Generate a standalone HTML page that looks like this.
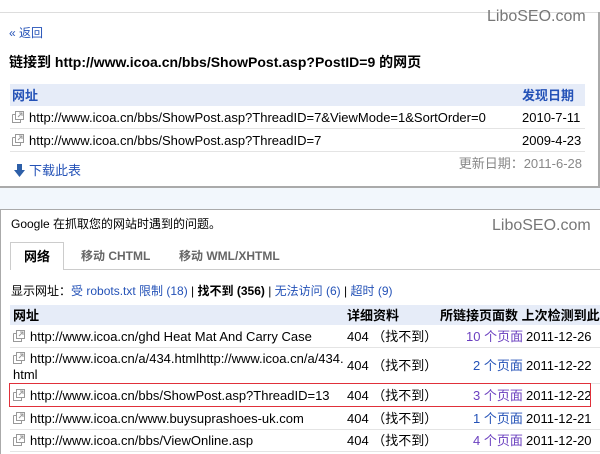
<!DOCTYPE html>
<html><head><meta charset="utf-8"><style>
*{margin:0;padding:0;box-sizing:border-box}
body{width:600px;height:454px;overflow:hidden;background:#fff;font-family:"Liberation Sans","Noto Sans CJK SC",sans-serif;position:relative;color:#000}
.a{position:absolute;white-space:nowrap;line-height:15px}
.lib{font-size:16px;color:#777;line-height:18px}
.blue{color:#2452b7}
.u{font-size:13px}
.ic{display:inline-block;width:12px;height:12px;vertical-align:-1px;margin-right:5px}
.line{position:absolute;height:1px;background:#e4e4e4}
</style></head><body>
<svg width="0" height="0" style="position:absolute"><symbol id="i" viewBox="0 0 12 12"><path d="M0.5 3.5h3M0.5 3.5v8h8v-3" fill="none" stroke="#999"/><rect x="3.5" y="0.5" width="8" height="8" fill="#fff" stroke="#999"/><path d="M6 6l4-4M7 2h3v3" fill="none" stroke="#999"/></symbol></svg>
<div class="line" style="left:0;top:12px;width:600px;background:#ddd"></div>
<div class="a lib" style="left:487px;top:8px">LiboSEO.com</div>
<div class="a blue" style="left:9px;top:26px;font-size:12px">« 返回</div>
<div class="a" style="left:9px;top:55px;font-size:14px;font-weight:bold">链接到 http://www.icoa.cn/bbs/ShowPost.asp?PostID=9 的网页</div>
<div class="a" style="left:10px;top:84px;width:575px;height:22px;background:#e6ecf8"></div>
<div class="a blue" style="left:12px;top:88px;font-size:13px;font-weight:bold">网址</div>
<div class="a blue" style="left:522px;top:88px;font-size:13px;font-weight:bold">发现日期</div>
<div class="a u" style="left:12px;top:110px"><svg class="ic"><use href="#i"/></svg>http://www.icoa.cn/bbs/ShowPost.asp?ThreadID=7&amp;ViewMode=1&amp;SortOrder=0</div>
<div class="a u" style="left:522px;top:110px">2010-7-11</div>
<div class="line" style="left:10px;top:128px;width:575px"></div>
<div class="a u" style="left:12px;top:133px"><svg class="ic"><use href="#i"/></svg>http://www.icoa.cn/bbs/ShowPost.asp?ThreadID=7</div>
<div class="a u" style="left:522px;top:133px">2009-4-23</div>
<div class="line" style="left:10px;top:151px;width:575px"></div>
<div class="a" style="top:156px;font-size:13px;color:#888;right:18px;text-align:right">更新日期：2011-6-28</div>
<div class="a" style="left:14px;top:164px;width:11px;height:13px">
<svg width="11" height="13"><path d="M3 0h5v6h3l-5.5 7L0 6h3z" fill="#2d5fa8"/></svg></div>
<div class="a blue" style="left:29px;top:163px;font-size:13px">下载此表</div>
<div class="a" style="left:598px;top:12px;width:2px;height:176px;background:#aaa"></div>
<div class="a" style="left:0;top:186px;width:600px;height:2px;background:#aaa"></div>
<div class="a" style="left:0;top:188px;width:600px;height:21px;background:#f2f7fc"></div>
<div class="a" style="left:0;top:209px;width:600px;height:1px;background:#aaa"></div>
<div class="a" style="left:0;top:209px;width:1px;height:245px;background:#aaa"></div>
<div class="a" style="left:11px;top:217px;font-size:12px">Google 在抓取您的网站时遇到的问题。</div>
<div class="a lib" style="left:492px;top:217px">LiboSEO.com</div>
<div class="a" style="left:10px;top:269px;width:590px;height:1px;background:#ccc"></div>
<div class="a" style="left:10px;top:242px;width:54px;height:28px;border:1px solid #ccc;border-bottom:none;background:#fff"></div>
<div class="a" style="left:24px;top:249px;font-size:13px;font-weight:bold">网络</div>
<div class="a" style="left:81px;top:249px;font-size:12px;font-weight:bold;color:#666">移动 CHTML</div>
<div class="a" style="left:179px;top:249px;font-size:12px;font-weight:bold;color:#666">移动 WML/XHTML</div>
<div class="a" style="left:11px;top:284px;font-size:12px">显示网址：<span class="blue">受 robots.txt 限制 (18)</span> | <b>找不到 (356)</b> | <span class="blue">无法访问 (6)</span> | <span class="blue">超时 (9)</span></div>
<div class="a" style="left:10px;top:305px;width:590px;height:20px;background:#e6ecf8"></div>
<div class="a" style="left:13px;top:308px;font-size:13px;font-weight:bold">网址</div>
<div class="a" style="left:347px;top:308px;font-size:13px;font-weight:bold">详细资料</div>
<div class="a" style="left:440px;top:308px;font-size:13px;font-weight:bold">所链接页面数 上次检测到此</div>
<div class="a u" style="left:13px;top:329px"><svg class="ic"><use href="#i"/></svg>http://www.icoa.cn/ghd Heat Mat And Carry Case</div>
<div class="a u" style="left:347px;top:329px">404 （找不到）</div>
<div class="a u" style="left:466px;top:329px;color:#6a3fbf">10 个页面</div>
<div class="a u" style="left:526px;top:329px">2011-12-26</div>
<div class="line" style="left:10px;top:347px;width:590px"></div>
<div class="a u" style="left:13px;top:351px;line-height:16px"><svg class="ic"><use href="#i"/></svg>http://www.icoa.cn/a/434.htmlhttp://www.icoa.cn/a/434.<br>html</div>
<div class="a u" style="left:347px;top:358px">404 （找不到）</div>
<div class="a u" style="left:473px;top:358px;color:#2452b7">2 个页面</div>
<div class="a u" style="left:526px;top:358px">2011-12-22</div>
<div class="line" style="left:10px;top:383px;width:590px"></div>
<div class="a u" style="left:13px;top:388px"><svg class="ic"><use href="#i"/></svg>http://www.icoa.cn/bbs/ShowPost.asp?ThreadID=13</div>
<div class="a u" style="left:347px;top:388px">404 （找不到）</div>
<div class="a u" style="left:473px;top:388px;color:#6a3fbf">3 个页面</div>
<div class="a u" style="left:526px;top:388px">2011-12-22</div>
<div class="a" style="left:9px;top:383px;width:582px;height:24px;border:1px solid #e0303a"></div>
<div class="a u" style="left:13px;top:411px"><svg class="ic"><use href="#i"/></svg>http://www.icoa.cn/www.buysuprashoes-uk.com</div>
<div class="a u" style="left:347px;top:411px">404 （找不到）</div>
<div class="a u" style="left:473px;top:411px;color:#2452b7">1 个页面</div>
<div class="a u" style="left:526px;top:411px">2011-12-21</div>
<div class="line" style="left:10px;top:429px;width:590px"></div>
<div class="a u" style="left:13px;top:433px"><svg class="ic"><use href="#i"/></svg>http://www.icoa.cn/bbs/ViewOnline.asp</div>
<div class="a u" style="left:347px;top:433px">404 （找不到）</div>
<div class="a u" style="left:473px;top:433px;color:#6a3fbf">4 个页面</div>
<div class="a u" style="left:526px;top:433px">2011-12-20</div>
<div class="line" style="left:10px;top:451px;width:590px"></div>
</body></html>
